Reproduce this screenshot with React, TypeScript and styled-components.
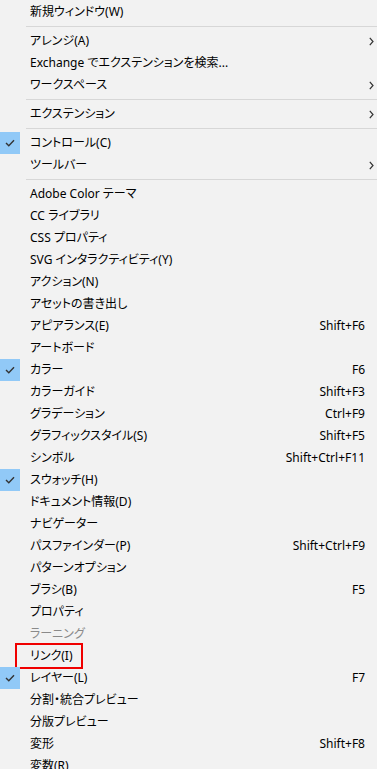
import * as React from 'react';
import styled, { createGlobalStyle } from 'styled-components';

type Entry =
  | { sep: true }
  | {
      label: string;
      shortcut?: string;
      checked?: boolean;
      submenu?: boolean;
      disabled?: boolean;
      marked?: boolean;
    };

const entries: Entry[] = [
  { label: '新規ウィンドウ(W)' },
  { sep: true },
  { label: 'アレンジ(A)', submenu: true },
  { label: 'Exchange でエクステンションを検索...' },
  { label: 'ワークスペース', submenu: true },
  { sep: true },
  { label: 'エクステンション', submenu: true },
  { sep: true },
  { label: 'コントロール(C)', checked: true },
  { label: 'ツールバー', submenu: true },
  { sep: true },
  { label: 'Adobe Color テーマ' },
  { label: 'CC ライブラリ' },
  { label: 'CSS プロパティ' },
  { label: 'SVG インタラクティビティ(Y)' },
  { label: 'アクション(N)' },
  { label: 'アセットの書き出し' },
  { label: 'アピアランス(E)', shortcut: 'Shift+F6' },
  { label: 'アートボード' },
  { label: 'カラー', shortcut: 'F6', checked: true },
  { label: 'カラーガイド', shortcut: 'Shift+F3' },
  { label: 'グラデーション', shortcut: 'Ctrl+F9' },
  { label: 'グラフィックスタイル(S)', shortcut: 'Shift+F5' },
  { label: 'シンボル', shortcut: 'Shift+Ctrl+F11' },
  { label: 'スウォッチ(H)', checked: true },
  { label: 'ドキュメント情報(D)' },
  { label: 'ナビゲーター' },
  { label: 'パスファインダー(P)', shortcut: 'Shift+Ctrl+F9' },
  { label: 'パターンオプション' },
  { label: 'ブラシ(B)', shortcut: 'F5' },
  { label: 'プロパティ' },
  { label: 'ラーニング', disabled: true },
  { label: 'リンク(I)', marked: true },
  { label: 'レイヤー(L)', shortcut: 'F7', checked: true },
  { label: '分割・統合プレビュー' },
  { label: '分版プレビュー' },
  { label: '変形', shortcut: 'Shift+F8' },
  { label: '変数(R)' },
];

const CheckIcon = () => (
  <svg width="10" height="8" viewBox="0 0 10 8">
    <polyline points="1,4 3.8,6.8 9,1.2" fill="none" stroke="#333" strokeWidth="1.4" />
  </svg>
);

const ArrowIcon = () => (
  <svg width="5" height="9" viewBox="0 0 5 9">
    <polyline points="0.8,0.8 4,4.5 0.8,8.2" fill="none" stroke="#333" strokeWidth="1.2" />
  </svg>
);

const App = () => (
  <>
    <GlobalStyle />
    <Menu>
      {entries.map((e, i) =>
        'sep' in e ? (
          <Separator key={i} />
        ) : (
          <Item key={i} $disabled={e.disabled}>
            <Gutter>{e.checked && <CheckBox><CheckIcon /></CheckBox>}</Gutter>
            <Label>{e.label}</Label>
            <Shortcut>{e.shortcut}</Shortcut>
            <Arrow>{e.submenu && <ArrowIcon />}</Arrow>
            {e.marked && <Highlight />}
          </Item>
        )
      )}
    </Menu>
  </>
);

export default App;

const GlobalStyle = createGlobalStyle`
  html, body {
    margin: 0;
    padding: 0;
    background: #f2f2f2;
    overflow: hidden;
  }
`;

const Menu = styled.div`
  display: flex;
  flex-direction: column;
  padding-top: 1px;
  width: 377px;
  background: #f2f2f2;
  font-family: 'Noto Sans', 'Noto Sans CJK JP', sans-serif;
  font-size: 12px;
  font-feature-settings: 'palt';
  color: #000;
`;

const Item = styled.div<{ $disabled?: boolean }>`
  position: relative;
  display: grid;
  grid-template-columns: 30px 1fr auto 12px;
  align-items: center;
  height: 22px;
  color: ${(p) => (p.$disabled ? '#8a8a8a' : '#000')};
`;

const Gutter = styled.div`
  height: 22px;
`;

const CheckBox = styled.div`
  display: flex;
  align-items: center;
  justify-content: center;
  width: 20px;
  height: 22px;
  background: #91c9f7;
`;

const Label = styled.span`
  white-space: nowrap;
  line-height: 22px;
`;

const Shortcut = styled.span`
  white-space: nowrap;
  line-height: 22px;
`;

const Arrow = styled.div`
  display: flex;
  align-items: center;
  padding-left: 4px;
`;

const Separator = styled.div`
  height: 1px;
  margin: 3px 0 3px 26px;
  background: #d7d7d7;
`;

const Highlight = styled.div`
  position: absolute;
  left: 15px;
  top: -2px;
  width: 68px;
  height: 26px;
  box-sizing: border-box;
  border: 2px solid #f00000;
`;
